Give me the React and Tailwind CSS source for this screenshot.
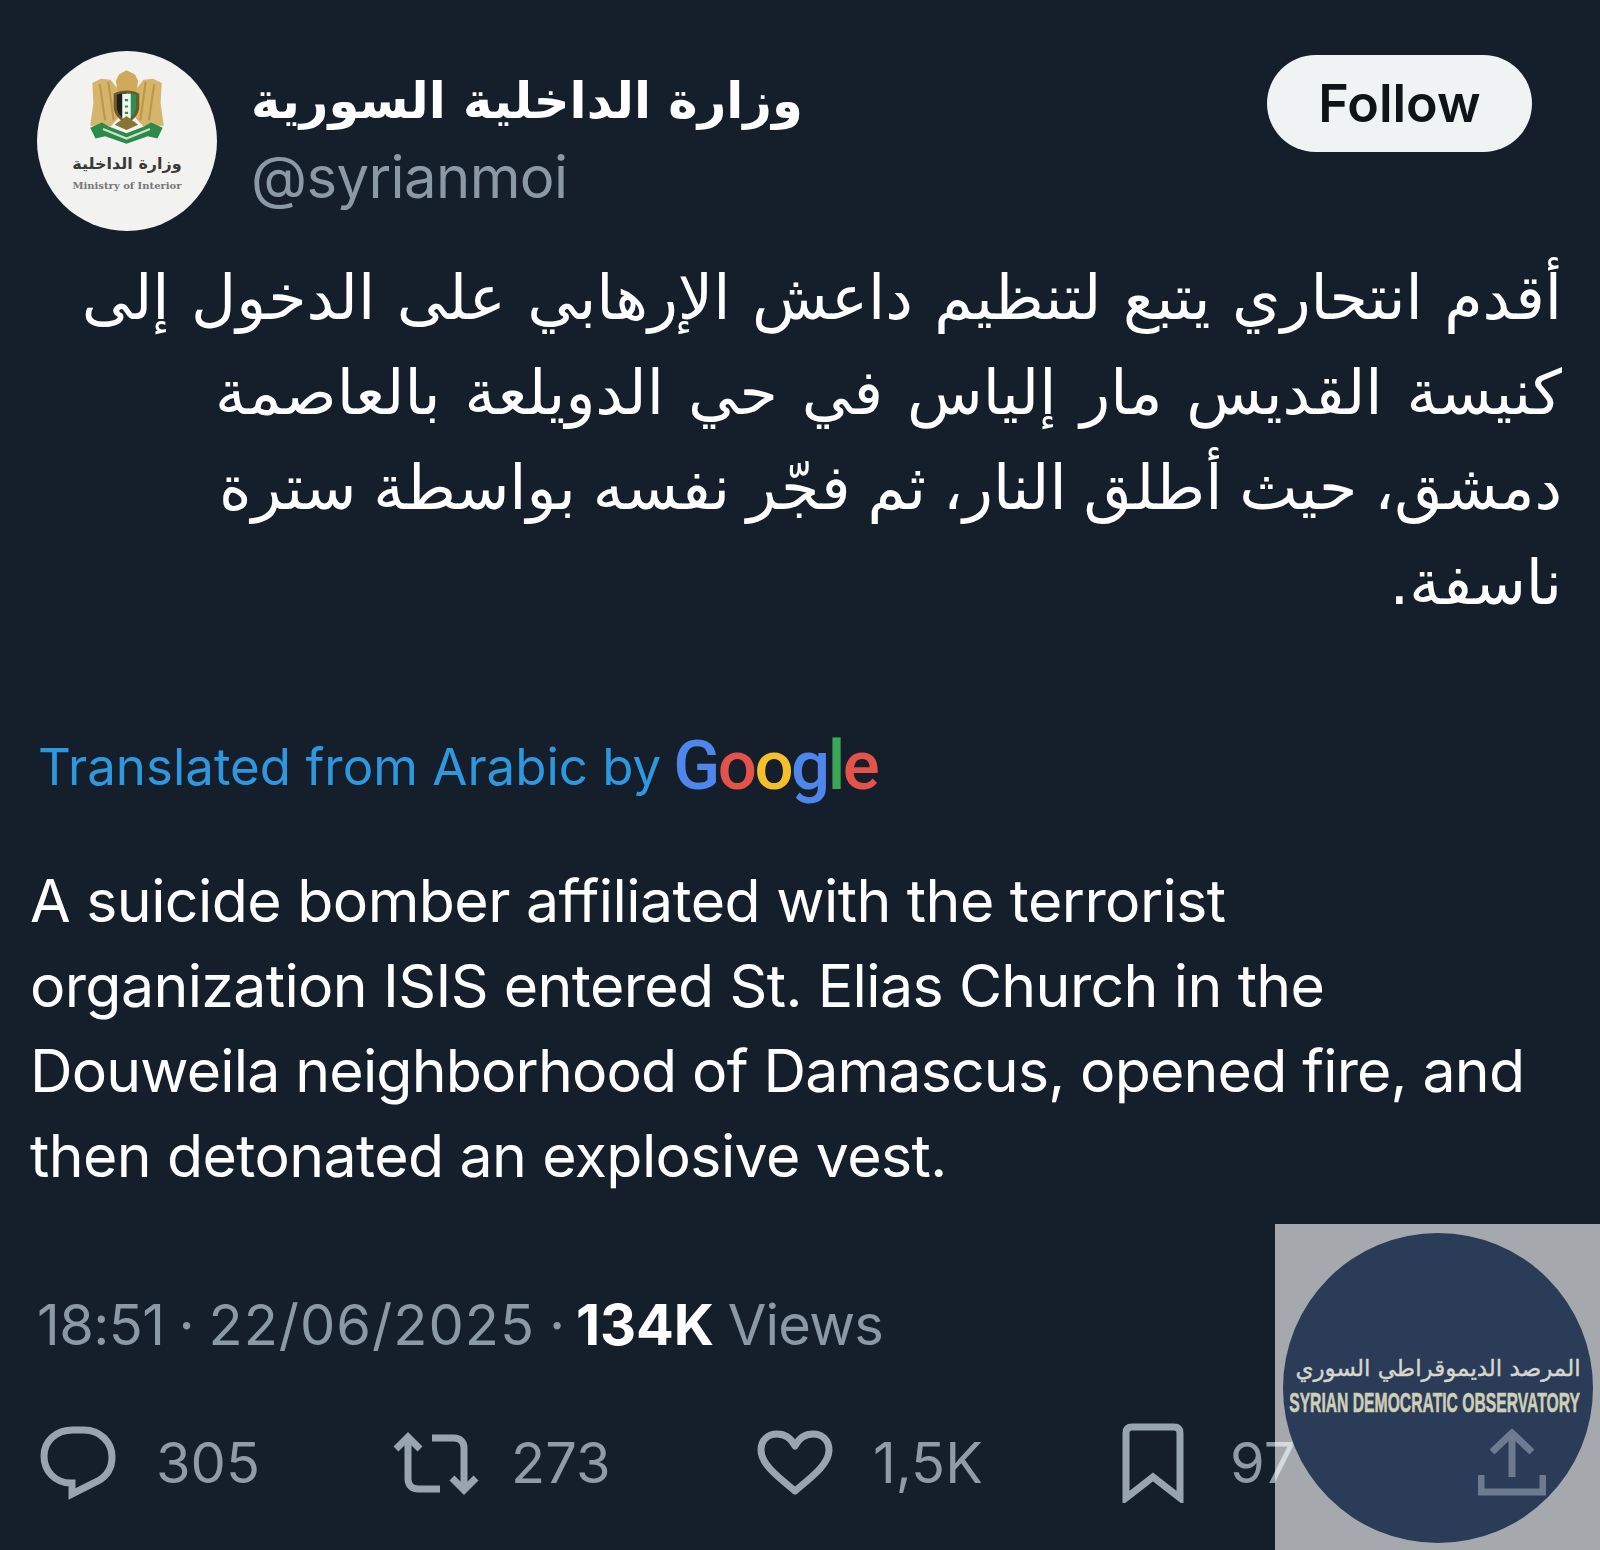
import React from 'react';

function Emblem() {
  return (
    <svg viewBox="0 0 75 70" className="w-[80px] h-[75px]">
      <path d="M3 53L6 32 5 13 13 9l9 1 8 10 1 24-9 10-8-2-4 1z" fill="#d5b46b" />
      <path d="M72 53L69 32 70 13 62 9l-9 1-8 10-1 24 9 10 8-2 4 1z" fill="#d5b46b" />
      <path d="M37 1l8 4 3 6-2 11H29l-2-11 3-6z" fill="#cfa95c" />
      <path d="M12 14l5 34M20 12l5 36M63 14l-5 34M55 12l-5 36" stroke="#bd9648" strokeWidth="2" fill="none" />
      <path d="M37 20c7 0 12 3 12 3v12c0 8-6 13-12 16-6-3-12-8-12-16V23s5-3 12-3z" fill="#6b5a2c" />
      <path d="M37 22c-4 0-9 2-9 2v11c0 6 4 10 8 13z" fill="#1e1e1c" />
      <path d="M37 22c4 0 9 2 9 2v11c0 6-4 10-8 13z" fill="#2f8f52" />
      <path d="M33 23h8v23l-4 2-4-2z" fill="#f3f3ef" />
      <path d="M37 28v2M37 34v2M37 40v2" stroke="#2f8f52" strokeWidth="3" />
      <path d="M3 55l11-5 7 4 16 6 16-6 7-4 11 5-5 10-9-2-20 7-20-7-9 2z" fill="#2c8a4d" />
      <path d="M15 56l22 9 22-9" stroke="#cfe3c4" strokeWidth="2" fill="none" />
      <path d="M26 52l11-8 11 8-11 5z" fill="#8a7433" />
    </svg>
  );
}

function Action({ icon, label, className }) {
  return (
    <div className={`flex items-center ${className}`}>
      {icon}
      <span>{label}</span>
    </div>
  );
}

export default function App() {
  return (
    <div className="relative w-[1600px] h-[1550px] overflow-hidden bg-[#151f2b] font-['Inter','Liberation_Sans',sans-serif] text-white">
      <div className="flex items-start pl-[37px] pr-[68px] pt-[51px]">
        <div className="flex flex-col items-center w-[180px] h-[180px] rounded-full bg-[#f2f2f1] pt-[18px] overflow-hidden">
          <Emblem />
          <div dir="rtl" className="mt-[8px] text-[#3a3a38] text-[16px] leading-[24px] font-bold font-['DejaVu_Sans',sans-serif]">وزارة الداخلية</div>
          <div className="mt-[3px] text-[#777] text-[10px] leading-[14px] font-bold font-['DejaVu_Serif',serif]">Ministry of Interior</div>
        </div>
        <div className="ml-[34px] pt-[15px]">
          <div dir="rtl" className="text-[49.7px] leading-[70px] font-bold font-['DejaVu_Sans',sans-serif] text-white text-left">وزارة الداخلية السورية</div>
          <div className="mt-[6px] text-[58px] leading-[70px] text-[#8b98a5] tracking-[-0.6px]">@syrianmoi</div>
        </div>
        <div className="ml-auto mt-[4px] flex items-center justify-center w-[265px] h-[97px] rounded-full bg-[#eff3f4] text-[#0f1419] text-[52px] font-semibold">Follow</div>
      </div>

      <div dir="rtl" className="mt-[19px] pl-[40px] pr-[38px] text-[62px] leading-[95px] whitespace-nowrap font-['DejaVu_Sans',sans-serif] text-white">
        <div className="[word-spacing:1.8px]">أقدم انتحاري يتبع لتنظيم داعش الإرهابي على الدخول إلى</div>
        <div className="[word-spacing:4.2px]">كنيسة القديس مار إلياس في حي الدويلعة بالعاصمة</div>
        <div className="[word-spacing:-2.8px]">دمشق، حيث أطلق النار، ثم فجّر نفسه بواسطة سترة</div>
        <div>ناسفة.</div>
      </div>

      <div className="mt-[92px] flex items-baseline pl-[38px] h-[80px] text-[51px] leading-[80px] text-[#2f97de]">
        <span>Translated from Arabic by</span>
        <span className="ml-[12px] translate-y-[4px] text-[69px] font-medium font-['Roboto',sans-serif] tracking-[-2.5px]">
          <span className="text-[#4f86ec]">G</span>
          <span className="text-[#e3534a]">o</span>
          <span className="text-[#f4bf2a]">o</span>
          <span className="text-[#4f86ec]">g</span>
          <span className="text-[#3aa757]">l</span>
          <span className="text-[#e3534a]">e</span>
        </span>
      </div>

      <div className="mt-[56px] pl-[30px] text-[59px] leading-[85px] text-white">
        <div className="tracking-[-0.55px]">A suicide bomber affiliated with the terrorist</div>
        <div className="tracking-[-0.63px]">organization ISIS entered St. Elias Church in the</div>
        <div className="tracking-[-0.83px]">Douweila neighborhood of Damascus, opened fire, and</div>
        <div className="tracking-[-0.6px]">then detonated an explosive vest.</div>
      </div>

      <div className="mt-[92px] pl-[37px] flex items-center h-[70px] text-[56px] leading-[70px] text-[#8b98a5]">
        <span className="tracking-[-0.6px]">18:51</span>
        <span className="mx-[14px]">·</span>
        <span className="tracking-[1px]">22/06/2025</span>
        <span className="ml-[14px] mr-[11px]">·</span>
        <span className="text-white font-bold tracking-[-0.2px]">134K</span>
        <span className="ml-[14px] tracking-[-0.8px]">Views</span>
      </div>

      <div className="mt-[63px] pl-[40px] flex items-center h-[80px] text-[56px] text-[#8f9ca8]">
        <Action
          className="w-[353px]"
          label="305"
          icon={
            <svg viewBox="0 0 76 74" className="w-[76px] h-[74px] mr-[40px]" fill="none" stroke="#98a5b1" strokeWidth="7">
              <path d="M33 4h11c16 0 28 12 28 27 0 11-5 19-14 24L32 68V57h-1C15 57 4 45 4 30 4 15 16 4 33 4z" strokeLinejoin="miter" />
            </svg>
          }
        />
        <Action
          className="w-[364px]"
          label="273"
          icon={
            <svg viewBox="0 0 90 64" className="w-[90px] h-[64px] mr-[28px]" fill="none" stroke="#98a5b1" strokeWidth="7">
              <path d="M15 6v42c0 6 4 10 10 10h22" />
              <path d="M3 18L15 6l12 12" />
              <path d="M39 7h22c6 0 10 4 10 10v42" />
              <path d="M59 47l12 12 12-12" />
            </svg>
          }
        />
        <Action
          className="w-[365px]"
          label="1,5K"
          icon={
            <svg viewBox="0 0 76 66" className="w-[76px] h-[66px] mr-[40px]" fill="none" stroke="#98a5b1" strokeWidth="7">
              <path d="M38 61C20 46 4 34 4 20 4 10 11 4 20 4c8 0 14 4 18 12 4-8 10-12 18-12 9 0 16 6 16 16 0 14-16 26-34 41z" strokeLinejoin="round" />
            </svg>
          }
        />
        <Action
          label="97"
          icon={
            <svg viewBox="0 0 62 80" className="w-[62px] h-[80px] mr-[46px]" fill="none" stroke="#98a5b1" strokeWidth="7">
              <path d="M4 75V10c0-4 2-6 6-6h42c4 0 6 2 6 6v65L31 54z" />
            </svg>
          }
        />
      </div>

      <div className="absolute right-0 bottom-0 w-[325px] h-[326px] bg-white/[.615]">
        <div className="absolute left-[8px] top-[9px] w-[310px] h-[310px] rounded-full bg-[#2a3c57] flex flex-col items-center overflow-hidden">
          <div dir="rtl" className="mt-[118px] text-[23px] leading-[34px] whitespace-nowrap text-[#d6d6cc] [-webkit-text-stroke:0.4px_#d6d6cc] font-['DejaVu_Sans',sans-serif]">المرصد الديموقراطي السوري</div>
          <div className="mt-[2px] -translate-x-[3px] text-[28px] leading-[32px] whitespace-nowrap font-bold text-[#cfcfb8] [-webkit-text-stroke:0.6px_#cfcfb8] font-['Liberation_Sans',sans-serif] scale-x-[0.56]">SYRIAN DEMOCRATIC OBSERVATORY</div>
          <svg viewBox="0 0 68 68" className="absolute left-[195px] top-[196px] w-[68px] h-[68px]" fill="none" stroke="#6d7a90" strokeWidth="7">
            <path d="M34 48V5M14 23L34 4l20 19M3 46v17h62V46" />
          </svg>
        </div>
      </div>
    </div>
  );
}
